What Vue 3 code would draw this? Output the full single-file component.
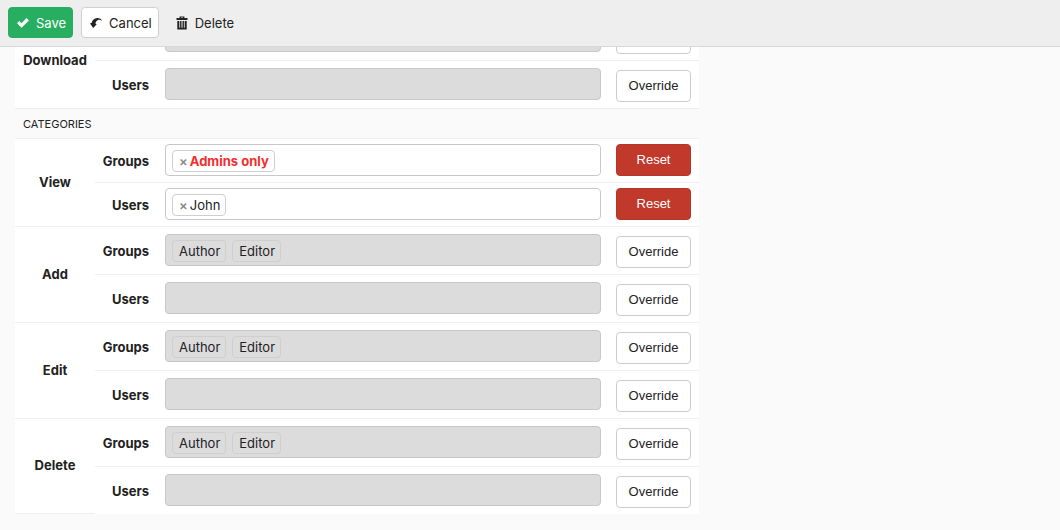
<script setup>
const sections = [
  {
    title: '',
    actions: [
      {
        name: 'Download',
        rows: [
          { kind: '', tags: [], own: false },
          { kind: 'Users', tags: [], own: false },
        ],
      },
    ],
  },
  {
    title: 'CATEGORIES',
    actions: [
      {
        name: 'View',
        rows: [
          { kind: 'Groups', tags: ['Admins only'], own: true },
          { kind: 'Users', tags: ['John'], own: true },
        ],
      },
      ...['Add', 'Edit', 'Delete'].map((name) => ({
        name,
        rows: [
          { kind: 'Groups', tags: ['Author', 'Editor'], own: false },
          { kind: 'Users', tags: [], own: false },
        ],
      })),
    ],
  },
]
const fieldId = (action, row) => `${action.name}-${row.kind}`.toLowerCase()
const buttonText = (row) => (row.own ? 'Reset' : row.kind ? 'Override' : '')
</script>

<template>
  <div class="screen">
    <header class="toolbar">
      <button type="button" class="tool save">
        <svg width="12" height="12" viewBox="0 0 14 12"><path d="M0 6.400 2.600 3.700 5.200 6.300 11.200 0.300 13.900 3 5.300 11.600Z" fill="currentColor" /></svg>
        Save
      </button>
      <button type="button" class="tool cancel">
        <svg width="12" height="12" viewBox="0 0 12 12"><path d="M0 6.400 1.700 5.800C2.100 3 4.400 1.100 7.300 1 9.600 1 11.500 2.100 12 4.300 10.900 3 9.600 2.500 8.200 2.900 6.500 3.400 5.600 4.900 5.400 6.500L6.700 7.200 3.200 11Z" fill="currentColor" /></svg>
        Cancel
      </button>
      <button type="button" class="tool delete">
        <svg width="12" height="14" viewBox="0 0 12 14"><path fill-rule="evenodd" d="M0.500 2H3.600V.5H8.400V2H11.500V4H.5ZM5 1.500V2H7V1.500ZM1.300 5H3.300V11.800H4.100V5H5.500V11.800H6.500V5H7.900V11.800H8.700V5H10.700V13.500H1.300Z" fill="currentColor" /></svg>
        Delete
      </button>
    </header>

    <main class="content">
      <table class="permissions">
        <colgroup>
          <col class="col-action" />
          <col class="col-kind" />
          <col />
          <col class="col-button" />
        </colgroup>
        <tbody v-for="section in sections" :key="section.title">
          <tr v-if="section.title" class="heading">
            <th colspan="4" class="section">{{ section.title }}</th>
          </tr>
          <template v-for="(action, a) in section.actions" :key="action.name">
            <tr v-for="(row, i) in action.rows" :key="row.kind" :class="{ own: row.own }">
              <th
                v-if="i === 0"
                :rowspan="action.rows.length"
                class="action"
                :class="{ last: section.title && a === section.actions.length - 1 }"
              >{{ action.name }}</th>
              <th class="kind"><label :for="fieldId(action, row)">{{ row.kind }}</label></th>
              <td class="value">
                <div class="field">
                  <span v-for="tag in row.tags" :key="tag" class="tag" :class="{ admin: tag === 'Admins only' }">
                    <button v-if="row.own" type="button" class="remove" :aria-label="`Remove ${tag}`">×</button>{{ tag }}
                  </span>
                  <input :id="fieldId(action, row)" type="text" :disabled="!row.own" />
                </div>
              </td>
              <td class="control">
                <button type="button" class="toggle">{{ buttonText(row) }}</button>
              </td>
            </tr>
          </template>
        </tbody>
      </table>
    </main>
  </div>
</template>

<style>
body {
  background: #fafafa;
}
</style>

<style scoped>
.screen {
  height: 100vh;
  display: flex;
  flex-direction: column;
  overflow: hidden;
  font-family: Inter, "Liberation Sans", sans-serif;
  font-size: 13px;
  line-height: 20px;
  color: #222;
}
button,
input {
  font: inherit;
  color: inherit;
  margin: 0;
  box-sizing: border-box;
}
.toolbar {
  flex: none;
  display: flex;
  gap: 8px;
  padding: 7px 8px 8px;
  background: #eee;
  border-bottom: 1px solid #d8d8d8;
}
.tool {
  display: flex;
  align-items: center;
  gap: 7px;
  height: 31px;
  padding: 0 6px 0 8px;
  border: 1px solid transparent;
  border-radius: 4px;
  background: none;
}
.tool svg {
  flex: none;
}
.save {
  background: #27ae60;
  border-color: #27ae60;
  color: #fff;
}
.cancel {
  background: #fff;
  border-color: #d0d0d0;
}
.content {
  flex: 1;
  min-height: 0;
  overflow: hidden;
  padding-left: 15px;
}
.permissions {
  width: 100%;
  max-width: 684px;
  margin-top: -35px;
  table-layout: fixed;
  border-collapse: separate;
  border-spacing: 0;
  background: #fff;
}
.col-action {
  width: 80px;
}
.col-kind {
  width: 62px;
}
.col-button {
  width: 91px;
}
th,
td {
  box-sizing: border-box;
  padding: 0;
  border-top: 1px solid #eee;
}
tr {
  height: 48px;
}
tr.own {
  height: 44px;
}
tr.heading {
  height: 30px;
}
.section {
  padding: 0 0 0 8px;
  background: #fafafa;
  font-size: 11px;
  font-weight: 400;
  text-align: left;
}
.action {
  padding-bottom: 2px;
  text-align: center;
}
.action.last {
  border-bottom: 1px solid #eee;
}
.kind {
  padding-right: 8px;
  text-align: right;
}
.value {
  padding: 7px 7px 0 8px;
  vertical-align: top;
}
.control {
  padding: 9px 8px 0;
  vertical-align: top;
}
.own .value,
.own .control {
  padding-top: 5px;
}
.field {
  display: flex;
  align-items: center;
  gap: 6px;
  height: 32px;
  box-sizing: border-box;
  padding: 2px 6px 0;
  border: 1px solid #c8c8c8;
  border-radius: 4px;
  background: #dcdcdc;
}
.own .field {
  background: #fff;
}
.field input {
  flex: 1;
  min-width: 0;
  height: 20px;
  padding: 0;
  border: 0;
  outline: 0;
  background: none;
}
.tag {
  display: flex;
  height: 20px;
  padding: 0 5px 0 6px;
  border: 1px solid #cfcfcf;
  border-radius: 4px;
}
.admin {
  color: #f22e2e;
  font-weight: 700;
}
.remove {
  padding: 0;
  margin-right: 2px;
  border: 0;
  background: none;
  color: #888;
  font-weight: 600;
}
.toggle {
  display: block;
  width: 100%;
  height: 32px;
  padding: 0;
  border: 1px solid #ccc;
  border-radius: 4px;
  background: #fff;
  font-family: "Liberation Sans", Arial, sans-serif;
}
.own .toggle {
  background: #c0392b;
  border-color: #b5352a;
  color: #fff;
}
</style>
